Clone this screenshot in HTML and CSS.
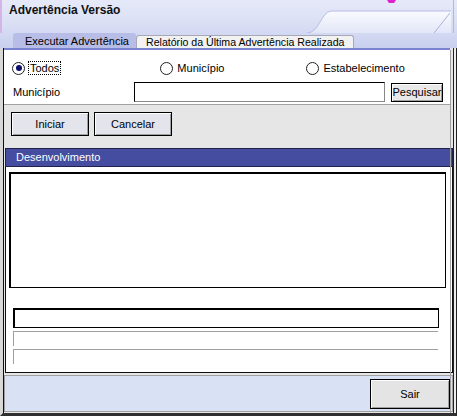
FILE: index.html
```html
<!DOCTYPE html>
<html lang="pt">
<head>
<meta charset="utf-8">
<title>Advertência Versão</title>
<link rel="stylesheet" href="styles.css">
</head>
<body>
<div class="win">
  <div class="titlebar">
    <span class="title">Advertência Versão</span>
    <svg class="deco" width="150" height="33" viewBox="0 0 150 33">
      <defs>
        <linearGradient id="g1" x1="0" y1="0" x2="0" y2="1">
          <stop offset="0" stop-color="#fafbff"/>
          <stop offset="1" stop-color="#e2e6f7"/>
        </linearGradient>
      </defs>
      <path d="M0 33 C12 33 14 12 24 11 L144 11 L144 33 Z" fill="url(#g1)"/>
      <path d="M0 33 C12 33 14 12 24 11 L144 11" fill="none" stroke="#b4bde3" stroke-width="1"/>
      <path d="M143 13 L127 33" stroke="#a9b2dc" stroke-width="1"/>
      <path d="M80 0 L89 0 L87 3 L82 3 Z" fill="#e020d0"/>
      <rect x="146" y="0" width="1" height="33" fill="#b0b8dc"/>
    </svg>
  </div>
  <div class="tabs">
    <div class="tab tab-active">Executar Advertência</div>
    <div class="tab">Relatório da Última Advertência Realizada</div>
  </div>
  <div class="frame">
    <div class="content">
      <div class="filter">
        <div class="radios">
          <label class="radio r-todos"><span class="dot checked"></span><span class="focus">Todos</span></label>
          <label class="radio r-mun"><span class="dot"></span><span>Município</span></label>
          <label class="radio r-est"><span class="dot"></span><span>Estabelecimento</span></label>
        </div>
        <div class="mun-row">
          <span class="mun-label">Município</span>
          <span class="input"></span>
          <span class="btn btn-small">Pesquisar</span>
        </div>
      </div>
      <div class="actions">
        <span class="btn btn-act">Iniciar</span>
        <span class="btn btn-act">Cancelar</span>
      </div>
      <div class="dev">
        <div class="dev-head">Desenvolvimento</div>
        <div class="dev-body">
          <div class="log"></div>
          <div class="progress"></div>
          <div class="line"></div>
          <div class="line"></div>
        </div>
      </div>
      <div class="footer">
        <span class="btn btn-sair">Sair</span>
      </div>
    </div>
  </div>
</div>
</body>
</html>
```
FILE: styles.css
```css
* { box-sizing: border-box; }
html, body { margin: 0; padding: 0; }
body {
  width: 457px;
  height: 416px;
  overflow: hidden;
  font-family: "Liberation Sans", Arial, sans-serif;
  font-size: 11px;
  color: #000;
  background: #e8e8e8;
}
.win {
  width: 457px;
  height: 416px;
  display: flex;
  flex-direction: column;
  background: linear-gradient(#e6e9f8 0px, #dce1f5 20px, #c9d0ef 48px);
}
.titlebar {
  position: relative;
  height: 33px;
  flex: none;
  border-left: 2px solid #d6b4e8;
}
.title {
  position: absolute;
  left: 7px;
  top: 3px;
  font-weight: bold;
  font-size: 12px;
  color: #101010;
}
.deco {
  position: absolute;
  left: 305px;
  top: 0;
}
.tabs {
  height: 15px;
  flex: none;
  display: flex;
  align-items: flex-end;
  padding-left: 13px;
  white-space: nowrap;
}
.tab {
  height: 13px;
  line-height: 12px;
  padding: 0 9px 0 9px;
  background: #f2f2f2;
  border: 1px solid #a8a8b8;
  border-bottom: none;
  border-radius: 3px 3px 0 0;
  color: #000;
  white-space: nowrap;
}
.tab-active {
  height: 15px;
  line-height: 15px;
  width: 123px;
  padding: 0 0 0 11px;
  background: #b8bde8;
  border-color: #b8bde8;
}
.tab + .tab { font-size: 10.6px; }
.frame {
  flex: 1;
  display: flex;
  border-left: 3px solid #d8d8d8;
  border-right: 1px solid #202020;
  border-bottom: 3px solid #303030;
  background: #ececec;
  padding-right: 2px;
}
.content {
  flex: 1;
  display: flex;
  flex-direction: column;
  border-left: 1px solid #101010;
  border-right: 1px solid #202020;
  background: #e6e6e6;
  position: relative;
}
.content::after {
  content: "";
  position: absolute;
  top: 2px;
  right: 2px;
  bottom: 0;
  width: 1px;
  background: #a0a0a0;
}
.filter {
  flex: none;
  height: 57px;
  border-top: 2px solid #7b82cf;
  background: #fff;
  border-bottom: 1px solid #a0a0a0;
  margin-right: 3px;
  padding: 9px 0 0 8px;
}
.radios {
  display: flex;
  height: 18px;
  align-items: center;
}
.radio {
  display: flex;
  align-items: center;
  gap: 4px;
}
.r-mun { margin-left: 100px; }
.r-est { margin-left: 82px; }
.dot {
  width: 13px;
  height: 13px;
  border-radius: 50%;
  border: 1px solid #202020;
  background: #fff;
  position: relative;
  display: inline-block;
}
.dot.checked::after {
  content: "";
  position: absolute;
  left: 2.5px;
  top: 2.5px;
  width: 6px;
  height: 6px;
  border-radius: 50%;
  background: #0c0c6c;
}
.focus {
  outline: 1px dotted #000;
  padding: 0 1px;
}
.mun-row {
  display: flex;
  align-items: center;
  margin-top: 5px;
  height: 20px;
}
.mun-label {
  width: 122px;
  padding-left: 1px;
}
.input {
  width: 251px;
  height: 20px;
  background: #fff;
  border: 1px solid #000;
  border-right-color: #888;
  border-bottom-color: #888;
  margin-right: 6px;
}
.btn {
  display: inline-flex;
  align-items: center;
  justify-content: center;
  background: #e6e6ee;
  border: 1px solid #000;
  box-shadow: inset 1px 1px 0 #fff, inset -1px -1px 0 #a0a0a0;
}
.btn-small {
  width: 52px;
  height: 19px;
  background: #e8e8e8;
}
.actions {
  flex: none;
  height: 43px;
  display: flex;
  gap: 5px;
  padding: 7px 0 0 7px;
}
.btn-act {
  width: 78px;
  height: 24px;
  background: #e4e4ec;
}
.dev {
  flex: none;
  margin-left: 1px;
  margin-right: 0;
}
.dev-head {
  height: 19px;
  background: #444d9f;
  border: 1px solid #20224a;
  color: #fff;
  padding-left: 10px;
  line-height: 16px;
}
.dev-body {
  height: 206px;
  background: #fff;
  border: 1px solid #101010;
  border-top: none;
  padding: 5px 0 0 3px;
}
.log {
  width: 437px;
  height: 116px;
  border: 1px solid #000;
  border-top-width: 2px;
  border-left-width: 2px;
}
.progress {
  width: 426px;
  height: 20px;
  margin: 20px 0 0 4px;
  border: 1px solid #000;
  border-top-width: 2px;
  border-left-width: 2px;
}
.line {
  width: 425px;
  height: 15px;
  margin: 3px 0 0 4px;
  border-top: 1px solid #a0a0a0;
  border-left: 1px solid #a0a0a0;
}
.footer {
  flex: none;
  height: 37px;
  margin-top: 2px;
  background: #d9e1f4;
  border: 1px solid #a0a0a0;
  display: flex;
  justify-content: flex-end;
  align-items: center;
  padding-right: 2px;
}
.btn-sair {
  width: 80px;
  height: 30px;
  background: #e4e4e4;
}
```
